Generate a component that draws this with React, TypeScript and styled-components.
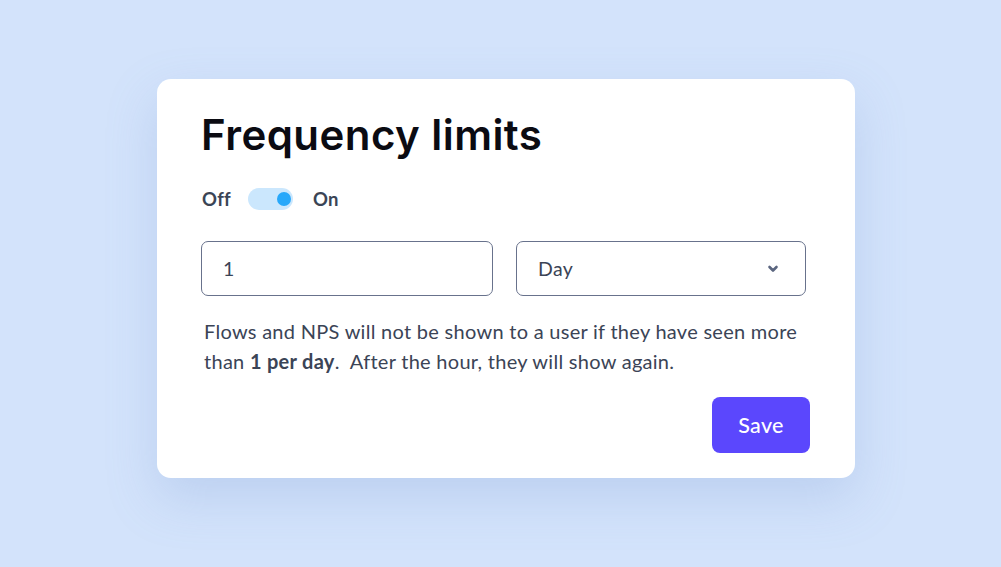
import styled, { createGlobalStyle } from 'styled-components'

const Global = createGlobalStyle`
  html, body { margin: 0; padding: 0; }
  body {
    background: #d3e3fb;
    font-family: "Lato", "Noto Sans", sans-serif;
    -webkit-font-smoothing: antialiased;
  }
`

const Page = styled.main`
  width: 1001px;
  height: 567px;
  box-sizing: border-box;
  padding-top: 79px;
  padding-left: 157px;
`

const Card = styled.section`
  width: 698px;
  height: 399px;
  box-sizing: border-box;
  background: #fff;
  border-radius: 14px;
  box-shadow: 0 20px 50px rgba(120, 150, 210, 0.25);
  padding: 28px 46px 0 44px;
  display: flex;
  flex-direction: column;
`

const Title = styled.h1`
  margin: 0;
  font-family: "Inter", "Noto Sans", sans-serif;
  font-weight: 600;
  font-size: 42px;
  line-height: 56px;
  letter-spacing: 0.45px;
  color: #0b0b12;
`

const ToggleRow = styled.div`
  display: flex;
  align-items: center;
  margin-top: 16px;
  padding-left: 1px;
  height: 40px;
  font-size: 18.5px;
  font-weight: 700;
  letter-spacing: 0.3px;
  color: #3b4456;
`

const Switch = styled.span<{ $on: boolean }>`
  position: relative;
  width: 45px;
  height: 22px;
  border-radius: 11px;
  background: #cbe7fd;
  margin: 0 20px 0 17px;
  &::after {
    content: '';
    position: absolute;
    top: 4px;
    left: ${p => (p.$on ? '29px' : '3px')};
    width: 14px;
    height: 14px;
    border-radius: 50%;
    background: #27a8fa;
  }
`

const Fields = styled.div`
  display: grid;
  grid-template-columns: 292px 290px;
  gap: 23px;
  margin-top: 22px;
`

const Field = styled.div`
  height: 55px;
  box-sizing: border-box;
  border: 1.5px solid #68728c;
  border-radius: 7px;
  display: flex;
  align-items: center;
  justify-content: space-between;
  padding: 0 26px 0 21px;
  font-size: 19.5px;
  letter-spacing: 0.3px;
  color: #3b4456;
`

const Chevron = styled.svg`
  width: 12px;
  height: 12px;
`

const Note = styled.p`
  margin: 20px 0 0 3px;
  font-size: 20px;
  line-height: 30px;
  letter-spacing: 0.28px;
  color: #3b4456;
  b { font-weight: 700; }
`

const Actions = styled.div`
  display: flex;
  justify-content: flex-end;
  margin-top: 21px;
  margin-right: -1px;
`

const SaveButton = styled.button`
  width: 98px;
  height: 56px;
  border: none;
  border-radius: 8px;
  background: #5b47fd;
  color: #fff;
  font-family: "Lato", "Noto Sans", sans-serif;
  font-size: 21.5px;
  font-weight: 500;
  letter-spacing: 0.3px;
`

export default function App() {
  return (
    <Page>
      <Global />
      <Card>
        <Title>Frequency limits</Title>
        <ToggleRow>
          <span>Off</span>
          <Switch $on />
          <span>On</span>
        </ToggleRow>
        <Fields>
          <Field>1</Field>
          <Field>
            Day
            <Chevron viewBox="0 0 12 12">
              <path d="M2.5 4 L6 7.5 L9.5 4" fill="none" stroke="#5b6680" strokeWidth="2.6" strokeLinecap="round" strokeLinejoin="round" />
            </Chevron>
          </Field>
        </Fields>
        <Note>
          Flows and NPS will not be shown to a user if they have seen more than <b>1 per day</b>.&nbsp; After the hour, they will show again.
        </Note>
        <Actions>
          <SaveButton>Save</SaveButton>
        </Actions>
      </Card>
    </Page>
  )
}
